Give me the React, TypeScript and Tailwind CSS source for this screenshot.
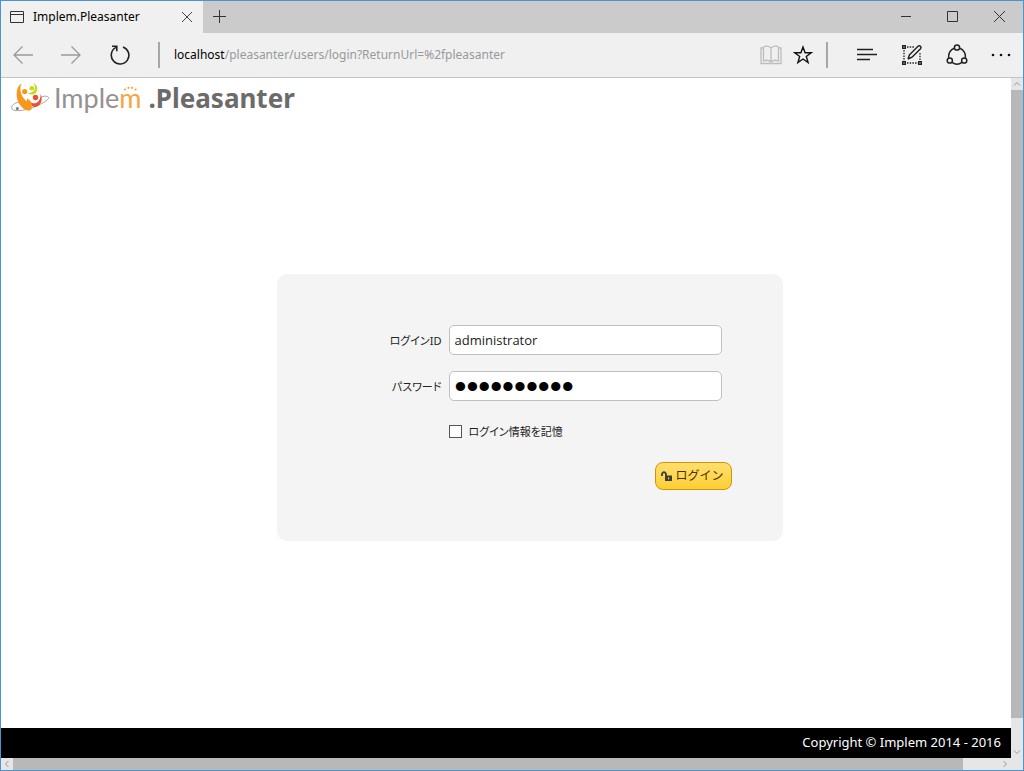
import React, { useState } from 'react';

const iconButton = "flex items-center justify-center shrink-0 h-8";

function ImplemMark() {
  return (
    <svg width="41" height="32" viewBox="0 0 41 32" fill="none" aria-hidden="true">
      <path d="M10 20C4 21.500 1.500 24.500 3 27C6 30.500 19 28 29 23.500C37 19.500 42 16 38.500 14.500C37 13.800 34 14.300 32 15" stroke="#aaa6a5" strokeWidth="1" />
      <path d="M12.500 1.500C7.500 4 6.500 13 9 19.500C11.500 25 16 28.700 20.500 28.700C22 27.500 22 24 20.500 21C17.500 19.500 15 17.500 13.500 14.500C11.500 10.500 10.500 6 12.500 1.500Z" fill="#f7981d" />
      <circle cx="15.700" cy="9.500" r="2.600" fill="#f7981d" />
      <circle cx="22.800" cy="6.300" r="2.300" fill="#c5d921" />
      <path d="M24 1C28.500 2.500 29.500 7 27 10.500C25 13 21.500 13.200 18.500 11C22 11.200 25.200 9.500 25.800 6.500C26.200 4.300 25.500 2.500 24 1Z" fill="#c5d921" />
      <circle cx="26.500" cy="15.500" r="2.700" fill="#e9502c" />
      <path d="M31.500 12C34 17 32.500 22.500 28 24.500C24.500 26 21 23.500 20.500 19C22.500 21.500 25.500 22 28 20.500C30.800 18.800 31.800 15.500 31.500 12Z" fill="#e9502c" />
      <path d="M18 16.500C22.500 18.500 24 23 22 28.500C19.500 26 17.500 22 18 16.500Z" fill="#f7981d" />
      <circle cx="8.300" cy="26.500" r="1.500" fill="#777" />
    </svg>
  );
}

function Logo() {
  return (
    <a href="#top" className="flex items-center h-9 px-2 text-[#6b6b6b] no-underline">
      <ImplemMark />
      <span className="relative font-['Lato','Liberation_Sans',sans-serif] text-[27px] leading-8 text-[#969190] ml-1">
        Imple<span className="text-[#f8a440]">m</span>
        <svg className="absolute right-1 top-1" width="16" height="5" viewBox="0 0 16 5" fill="#f8a440" aria-hidden="true">
          <circle cx="3" cy="3.500" r="1.100" />
          <circle cx="6.500" cy="1.800" r="1.100" />
          <circle cx="10" cy="1.800" r="1.100" />
          <circle cx="13.500" cy="3.500" r="1.100" />
        </svg>
      </span>
      <span className="ml-[7px] font-['Noto_Sans',sans-serif] text-[26px] leading-8 font-bold">.Pleasanter</span>
    </a>
  );
}

function TitleBar() {
  return (
    <div className="flex h-8 bg-[#cbcbcb] text-[#333]">
      <div className="flex items-center w-[202px] pl-2 pr-1.5 bg-[#f0f0f0]">
        <svg width="16" height="14" viewBox="0 0 16 14" fill="none" stroke="#333" aria-hidden="true">
          <path d="M1.500 1.500H14.500V12.500H1.500ZM1.500 4.500H14.500" />
        </svg>
        <span className="ml-2 flex-1 text-[12px] text-black">Implem.Pleasanter</span>
        <button aria-label="Close tab" className="p-1">
          <svg width="12" height="12" viewBox="0 0 12 12" stroke="#444"><path d="M1 1L11 11M11 1L1 11" /></svg>
        </button>
      </div>
      <button aria-label="New tab" className="px-2.5">
        <svg width="14" height="14" viewBox="0 0 14 14" stroke="#333"><path d="M6.500 0V13M0 6.500H13" /></svg>
      </button>
      <div className="ml-auto flex">
        <button aria-label="Minimize" className="flex items-center justify-center w-[47px]">
          <svg width="12" height="12" viewBox="0 0 12 12" stroke="#333"><path d="M1 5.500H11" /></svg>
        </button>
        <button aria-label="Maximize" className="flex items-center justify-center w-[47px]">
          <svg width="12" height="12" viewBox="0 0 12 12" fill="none" stroke="#333"><path d="M0.500 0.500H10.500V10.500H0.500Z" /></svg>
        </button>
        <button aria-label="Close" className="flex items-center justify-center w-[47px]">
          <svg width="12" height="12" viewBox="0 0 12 12" stroke="#333"><path d="M0 0L11 11M11 0L0 11" /></svg>
        </button>
      </div>
    </div>
  );
}

function Toolbar() {
  return (
    <div className="flex items-center h-[45px] bg-[#f0f0f0] border-b border-[#c4c4c4]">
      <button aria-label="Back" className={`${iconButton} w-11`}>
        <svg width="20" height="20" viewBox="0 0 20 20" fill="none" stroke="#9a9a9a" strokeWidth="1.300"><path d="M20 10H1M9.500 1.500L1 10L9.500 18.500" /></svg>
      </button>
      <button aria-label="Forward" className={`${iconButton} w-[52px]`}>
        <svg width="20" height="20" viewBox="0 0 20 20" fill="none" stroke="#9a9a9a" strokeWidth="1.300"><path d="M0 10H19M10.500 1.500L19 10L10.500 18.500" /></svg>
      </button>
      <button aria-label="Refresh" className={`${iconButton} w-[46px]`}>
        <svg width="20" height="20" viewBox="0 0 20 20" fill="none" stroke="#222" strokeWidth="1.600">
          <path d="M13 1.900A8.800 8.800 0 1 1 6 2.400M2 1.300H6.800V6.200" />
        </svg>
      </button>
      <div className="w-0.5 h-[26px] ml-[15px] bg-[#a6a6a6]" />
      <div className="flex-1 pl-3.5 text-[12px] whitespace-nowrap text-[#999]">
        <span className="text-black">localhost</span>/pleasanter/users/login?ReturnUrl=%2fpleasanter
      </div>
      <button aria-label="Reading view" className={`${iconButton} w-8`}>
        <svg width="22" height="20" viewBox="0 0 22 20" fill="none" stroke="#bdbdbd" strokeWidth="1.300">
          <path d="M11 3C9 .700 5.500 .700 3.500 2V16C6 15 9 15 11 17C13 15 16 15 18.500 16V2C16.500 .700 13 .700 11 3ZM11 3V17" />
          <path d="M3.500 3H1V18.500H21V3H18.500" />
        </svg>
      </button>
      <button aria-label="Add to favorites" className={`${iconButton} w-8`}>
        <svg width="20" height="20" viewBox="0 0 20 20" fill="none" stroke="#111" strokeWidth="1.400">
          <path d="M10 2L12.100 7.700H18.200L13.300 11.400L15.100 17.600L10 14L4.900 17.600L6.700 11.400L1.800 7.700H7.900Z" />
        </svg>
      </button>
      <div className="w-0.5 h-[26px] ml-[7px] bg-[#a6a6a6]" />
      <button aria-label="Hub" className={`${iconButton} w-11 ml-[17px]`}>
        <svg width="22" height="14" viewBox="0 0 22 14" stroke="#222" strokeWidth="1.500"><path d="M1 1.500H17M1 6.500H21M1 11.500H14" /></svg>
      </button>
      <button aria-label="Make a web note" className={`${iconButton} w-[45px]`}>
        <svg width="22" height="22" viewBox="0 0 22 22" fill="none" stroke="#222">
          <path d="M6 3H13M3 6V17M6 19H17M19 9V17" strokeWidth="1.300" strokeDasharray="1.500 1.200" />
          <path d="M1.700 1.700H4.300V4.300H1.700ZM1.700 17.700H4.300V20.300H1.700ZM17.700 17.700H20.300V20.300H17.700Z" strokeWidth="1.400" />
          <path d="M7 15L8.500 10.800L17 2.300C18.800 .800 21 3 19.500 4.700L11 13.200L7 15" strokeWidth="1.500" />
        </svg>
      </button>
      <button aria-label="Share" className={`${iconButton} w-[45px]`}>
        <svg width="22" height="22" viewBox="0 0 22 22" fill="none" stroke="#222" strokeWidth="1.500">
          <circle cx="11" cy="3.500" r="2.600" />
          <circle cx="3.800" cy="16.500" r="2.600" />
          <circle cx="18.200" cy="16.500" r="2.600" />
          <path d="M8.300 4.200C4.500 5.500 2 9.500 2.800 13.900M13.700 4.200C17.500 5.500 20 9.500 19.200 13.900M6 18.300C9 20.600 13 20.600 16 18.300" />
        </svg>
      </button>
      <button aria-label="More actions" className={`${iconButton} w-11`}>
        <svg width="20" height="4" viewBox="0 0 20 4" fill="#111"><circle cx="2" cy="2" r="1.300" /><circle cx="10" cy="2" r="1.300" /><circle cx="18" cy="2" r="1.300" /></svg>
      </button>
    </div>
  );
}

function LoginForm() {
  const [loginId, setLoginId] = useState("administrator");
  const [password, setPassword] = useState("pleasanter");
  const [remember, setRemember] = useState(false);

  const label = "w-[165px] pt-0.5 text-right text-[11px] [font-feature-settings:'palt']";
  const field = "flex-1 min-w-0 h-[30px] px-[5px] bg-white border border-[#c0c0c0] rounded-[5px] outline-none";

  return (
    <form
      onSubmit={(e) => e.preventDefault()}
      className="flex flex-col w-[506px] h-[267px] pt-[51px] bg-[#f4f4f4] rounded-[10px] text-[#222]"
    >
      <div className="flex items-center gap-[7px] pr-[61px]">
        <label htmlFor="loginId" className={label}>ログインID</label>
        <input id="loginId" value={loginId} onChange={(e) => setLoginId(e.target.value)} className={`${field} font-['Open_Sans',sans-serif] text-[13px]`} />
      </div>
      <div className="flex items-center gap-[7px] pr-[61px] mt-4">
        <label htmlFor="password" className={label}>パスワード</label>
        <input
          id="password"
          type="password"
          value={password}
          onChange={(e) => setPassword(e.target.value)}
          className={`${field} font-['Liberation_Sans',sans-serif] text-[34px] text-black`}
        />
      </div>
      <div className="flex items-center gap-[7px] pl-[172px] mt-5 h-5">
        <input
          id="remember"
          type="checkbox"
          checked={remember}
          onChange={(e) => setRemember(e.target.checked)}
          className="appearance-none size-[13px] bg-white border border-[#555] checked:bg-[#555]"
        />
        <label htmlFor="remember" className="pt-0.5 text-[11px] [font-feature-settings:'palt']">ログイン情報を記憶</label>
      </div>
      <button
        type="submit"
        className="flex items-center gap-0.5 self-end mt-[21px] mr-[51px] h-7 pl-[5px] pr-[7px] border border-[#d19405] rounded-lg bg-linear-to-b from-[#fedf6c] to-[#fece2f] text-[12px] text-[#4c3000]"
      >
        <svg width="12" height="12" viewBox="0 0 12 12" fill="none" aria-hidden="true">
          <path d="M1 6V4.500C1 1.500 5 1.500 5 4.500V7" stroke="#3d3d3d" strokeWidth="1.800" />
          <path d="M4 5.500H11V11H4Z" fill="#3d3d3d" />
          <path d="M7 7.500H8.200V9.300H7Z" fill="#fed447" />
        </svg>
        ログイン
      </button>
    </form>
  );
}

export default function App() {
  return (
    <div className="flex flex-col min-h-screen border border-[#4a94d0] bg-white font-['Noto_Sans','Noto_Sans_CJK_JP',sans-serif]">
      <TitleBar />
      <Toolbar />
      <div className="flex flex-1">
        <div className="flex flex-col flex-1 min-w-0">
          <header className="pt-0.5">
            <Logo />
          </header>
          <main className="flex flex-1 justify-center items-start pl-[47px] pt-[158px]">
            <LoginForm />
          </main>
          <footer className="flex items-center justify-end h-[30px] px-2.5 bg-black text-white text-[13px]">
            Copyright © Implem 2014 - 2016
          </footer>
        </div>
        {/* Vertical scrollbar */}
        <div className="flex flex-col items-center w-3 bg-[#e6e6e6]">
          <svg width="12" height="12" viewBox="0 0 12 12" fill="none" stroke="#999"><path d="M3 7.500L6 4.500L9 7.500" /></svg>
          <div className="flex-1 w-full bg-[#b8b8b8]" />
          <svg className="mt-7" width="12" height="12" viewBox="0 0 12 12" fill="none" stroke="#999"><path d="M3 4.500L6 7.500L9 4.500" /></svg>
        </div>
      </div>
      {/* Horizontal scrollbar */}
      <div className="flex h-3 bg-[#e6e6e6]">
        <svg width="12" height="12" viewBox="0 0 12 12" fill="none" stroke="#999"><path d="M7.500 3L4.500 6L7.500 9" /></svg>
        <div className="flex-1 bg-[#b8b8b8]" />
        <svg className="ml-9 mr-3" width="12" height="12" viewBox="0 0 12 12" fill="none" stroke="#999"><path d="M4.500 3L7.500 6L4.500 9" /></svg>
      </div>
    </div>
  );
}
